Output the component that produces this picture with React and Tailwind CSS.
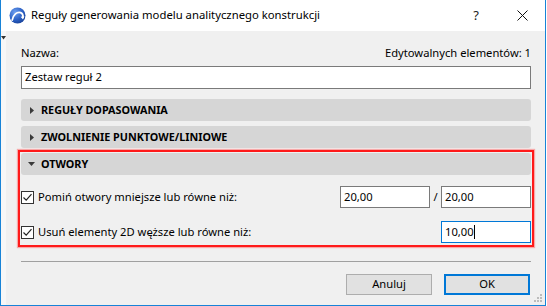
import { useState } from 'react'

const font = { fontFamily: '"Noto Sans", "Open Sans", sans-serif' }

function AppIcon() {
  return (
    <svg width="17" height="17" viewBox="0 0 17 17">
      <defs>
        <radialGradient id="ig" cx="0.35" cy="0.3" r="0.8">
          <stop offset="0" stopColor="#6ea0f0" />
          <stop offset="0.6" stopColor="#2a5fc4" />
          <stop offset="1" stopColor="#173f94" />
        </radialGradient>
      </defs>
      <circle cx="8.5" cy="8.5" r="8" fill="url(#ig)" />
      <path d="M3.2 13.2 C4.2 7.5 8 4.6 11.6 5.6 C13.4 6.2 14.2 8 14 10.4" fill="none" stroke="#fff" strokeWidth="1.8" strokeLinecap="round" />
      <path d="M11.6 9.8 L14 12.6 L15.4 9.2 Z" fill="#fff" />
    </svg>
  )
}

function Tri({ down }) {
  return down ? (
    <svg width="7" height="5" viewBox="0 0 7 5"><path d="M0 0 H7 L3.5 4 Z" fill="#3a3a3a" /></svg>
  ) : (
    <svg width="4" height="7" viewBox="0 0 4 7"><path d="M0 0 V7 L4 3.5 Z" fill="#3a3a3a" /></svg>
  )
}

function SectionBar({ label, open }) {
  return (
    <div className="h-[22px] rounded-[3px] bg-[#d6d6d6] flex items-center pl-[7px] gap-[6px]">
      <div className="w-[7px] flex justify-center"><Tri down={open} /></div>
      <span className="text-[10.8px] font-bold text-black">{label}</span>
    </div>
  )
}

function Check() {
  return (
    <div className="w-[13px] h-[13px] border border-[#333] bg-white flex items-center justify-center">
      <svg width="11" height="11" viewBox="0 0 11 11">
        <path d="M1.5 5.5 L4.2 8.2 L9.5 2.2" fill="none" stroke="#222" strokeWidth="1.2" />
      </svg>
    </div>
  )
}

function Field({ value, focused, caret }) {
  return (
    <div className={`w-[90px] h-[22px] bg-white border flex items-center px-[3px] text-[11.2px] text-black ${focused ? 'border-[#0078d7]' : 'border-[#7a7a7a]'}`}>
      <span>{value}</span>
      {caret && <span className="w-px h-[14px] bg-black"></span>}
    </div>
  )
}

export default function App() {
  const [name] = useState('Zestaw reguł 2')

  return (
    <div className="w-[547px] h-[306px] bg-white" style={font}>
      <div className="w-[546px] h-[306px] border-l border-r border-b border-[#1883d7] flex flex-col relative">
        {/* pasek tytułu */}
        <div className="h-[31px] bg-white flex items-center pl-[8px] shrink-0">
          <AppIcon />
          <span className="ml-[5px] text-[11.3px] text-black">Reguły generowania modelu analitycznego konstrukcji</span>
          <span className="ml-auto text-[13px] text-[#222] mr-[38px]">?</span>
          <svg className="mr-[17px]" width="11" height="11" viewBox="0 0 11 11">
            <path d="M0.5 0.5 L10.5 10.5 M10.5 0.5 L0.5 10.5" stroke="#111" strokeWidth="1" />
          </svg>
        </div>

        <div className="flex-1 flex bg-[#f0f0f0]">
          <div className="w-[5px] bg-[#f7f7f7] pt-[5px] flex justify-center">
            <svg width="5" height="4" viewBox="0 0 5 4"><path d="M0 0 H5 L2.5 3.5 Z" fill="#333" /></svg>
          </div>

          <div className="flex-1 pl-[15px] pr-[14px] text-[11.2px] text-black">
            <div className="flex justify-between items-center h-[20px] mt-[12px]">
              <span>Nazwa:</span>
              <span>Edytowalnych elementów: 1</span>
            </div>
            <div className="mt-[3px] h-[23px] bg-white border border-[#7a7a7a] flex items-center px-[3px]">
              {name}
            </div>

            <div className="mt-[10px] flex flex-col gap-[5px]">
              <SectionBar label="REGUŁY DOPASOWANIA" />
              <SectionBar label="ZWOLNIENIE PUNKTOWE/LINIOWE" />
            </div>

            {/* zaznaczenie */}
            <div className="mt-[2px] -mx-[3px] border-2 border-[#ff1a1a] px-px pt-px pb-[2px] shadow-[0_0_1px_1px_rgba(255,80,80,0.45)]">
              <SectionBar label="OTWORY" open />
              <div className="mt-[11px] flex items-center h-[22px]">
                <Check />
                <span className="ml-[4px]">Pomiń otwory mniejsze lub równe niż:</span>
                <div className="ml-auto flex items-center">
                  <Field value="20,00" />
                  <span className="w-[11px] text-center">/</span>
                  <Field value="20,00" />
                </div>
              </div>
              <div className="mt-[13px] flex items-center h-[22px]">
                <Check />
                <span className="ml-[4px]">Usuń elementy 2D węższe lub równe niż:</span>
                <div className="ml-auto">
                  <Field value="10,00" focused caret />
                </div>
              </div>
            </div>

            <div className="mt-[14px] h-px bg-[#a0a0a0]"></div>

            <div className="mt-[12px] flex justify-end gap-[12px]">
              <button className="w-[86px] h-[21px] bg-[#e1e1e1] border border-[#adadad] text-[11.2px] text-black">Anuluj</button>
              <button className="w-[86px] h-[21px] bg-[#e1e1e1] border-2 border-[#0078d7] text-[11.2px] text-black mr-px">OK</button>
            </div>
          </div>
        </div>

        {/* uchwyt zmiany rozmiaru */}
        <svg className="absolute right-[2px] bottom-[2px]" width="9" height="9" viewBox="0 0 9 9">
          <rect x="6" y="0" width="2" height="2" fill="#bcbcbc" />
          <rect x="3" y="3" width="2" height="2" fill="#bcbcbc" />
          <rect x="6" y="3" width="2" height="2" fill="#bcbcbc" />
          <rect x="0" y="6" width="2" height="2" fill="#bcbcbc" />
          <rect x="3" y="6" width="2" height="2" fill="#bcbcbc" />
          <rect x="6" y="6" width="2" height="2" fill="#bcbcbc" />
        </svg>
      </div>
    </div>
  )
}
